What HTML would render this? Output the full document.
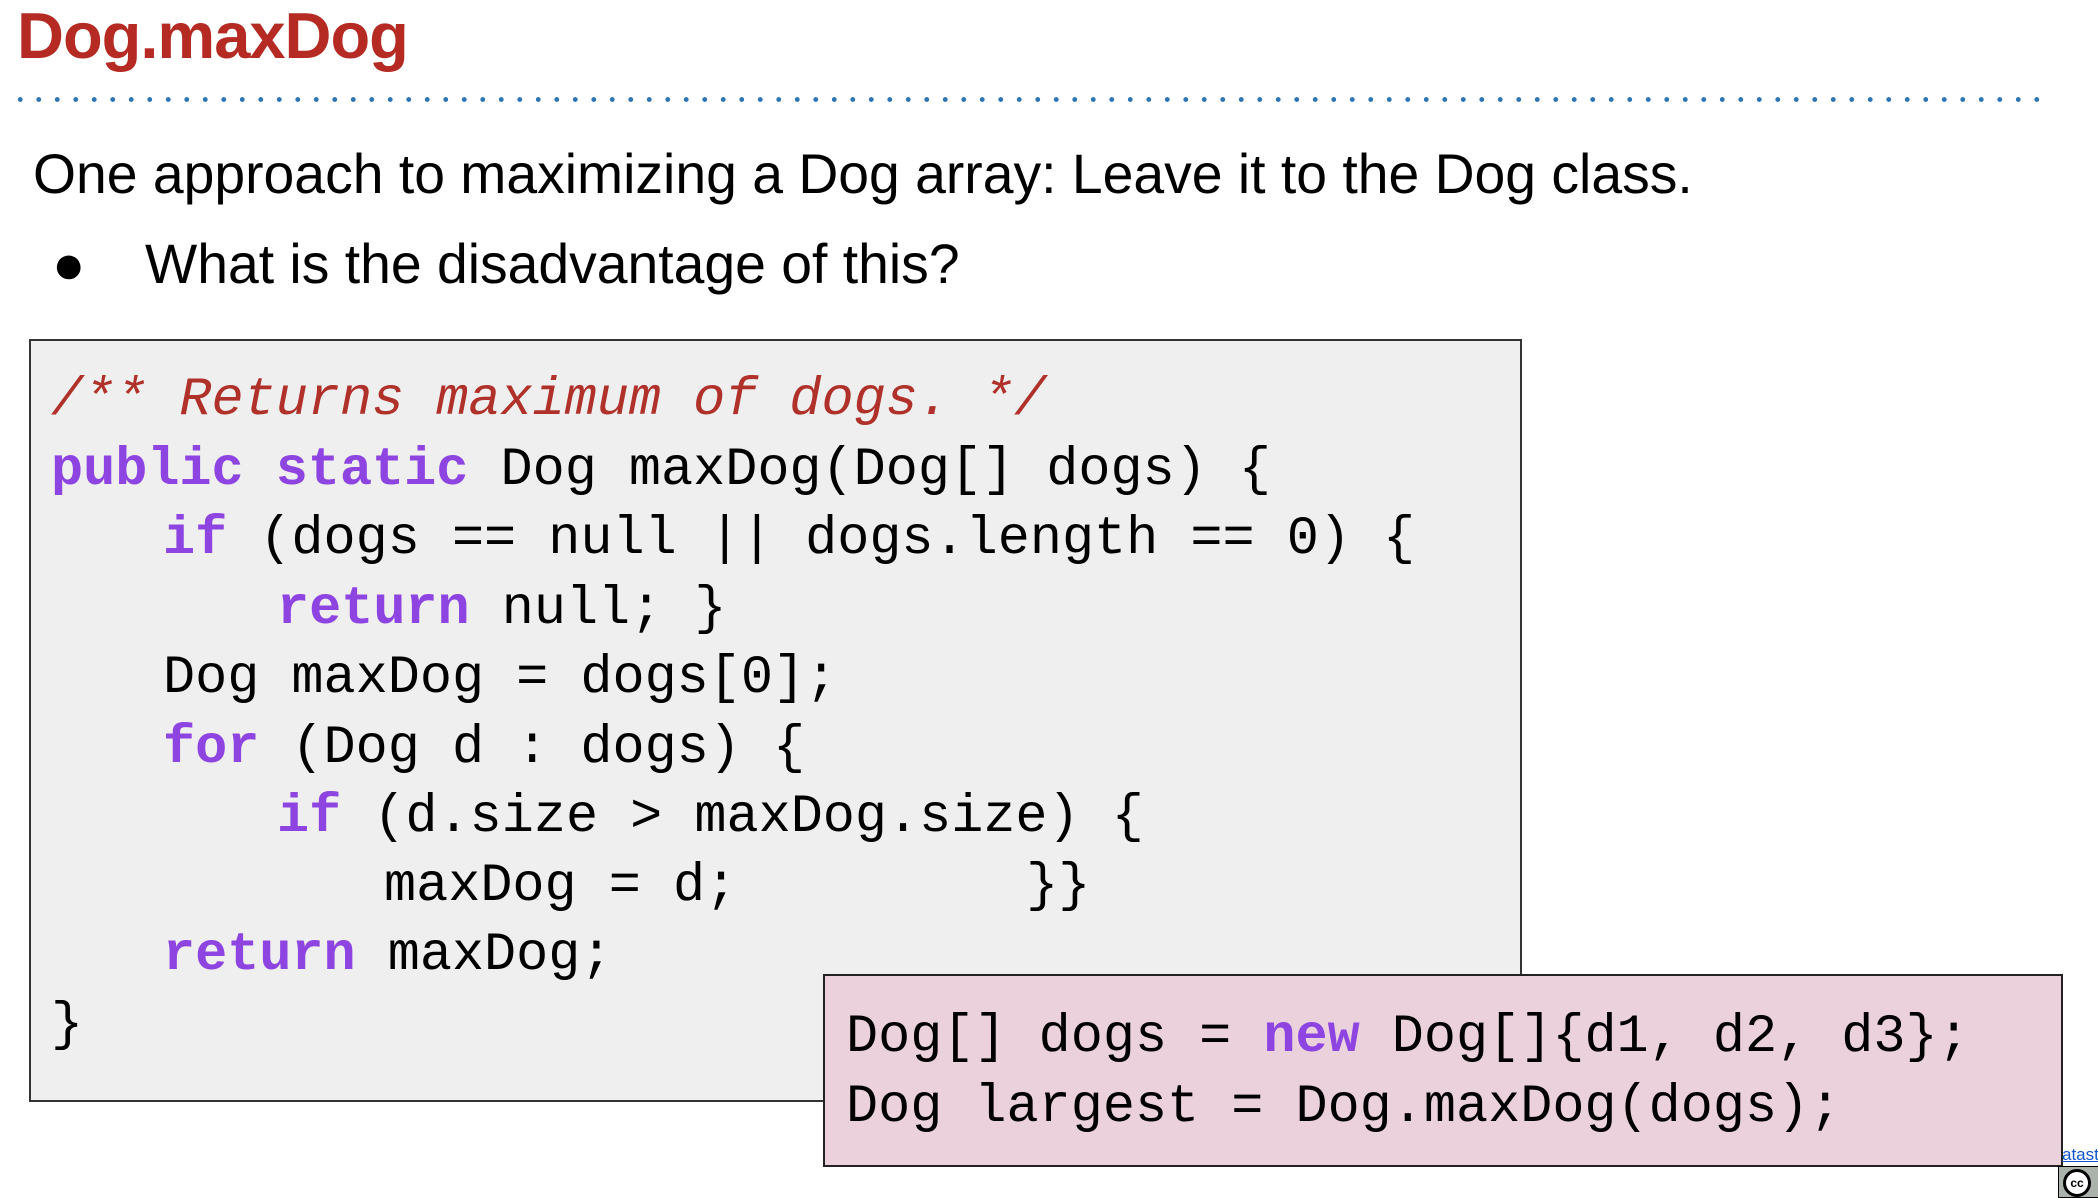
<!DOCTYPE html>
<html><head><meta charset="utf-8"><style>
body{margin:0;width:2098px;height:1196px;background:#fff;position:relative;overflow:hidden;font-family:"Liberation Sans",sans-serif}
.t{position:absolute;left:17px;top:-2px;font-size:65px;font-weight:bold;color:#b52a22;letter-spacing:-1px}
.dots{position:absolute;left:11px;top:97px;width:2040px;height:5px;background-image:radial-gradient(circle,#2e75b6 2.2px,transparent 2.6px);background-size:18.5px 5px;background-repeat:repeat-x}
.p{position:absolute;font-size:55.3px;color:#000;white-space:nowrap}
.box{position:absolute;left:29px;top:339px;width:1489px;height:759px;background:#efefef;border:2px solid #333}
.pink{position:absolute;left:823px;top:974px;width:1236px;height:189px;background:#ead1dc;border:2px solid #222}
.c{position:absolute;font-family:"Liberation Mono",monospace;font-size:53.5px;white-space:pre;color:#000;line-height:1}
.k{color:#8e44e0;font-weight:bold}
.cm{color:#b0302a;font-style:italic}
</style></head><body>
<div class="t">Dog.maxDog</div>
<div class="dots"></div>
<div class="p" style="left:33px;top:142px">One approach to maximizing a Dog array: Leave it to the Dog class.</div>
<div class="p" style="left:52px;top:232px">●</div>
<div class="p" style="left:145px;top:232px">What is the disadvantage of this?</div>
<div class="box"></div>
<div class="c cm" style="left:51px;top:374px">/** Returns maximum of dogs. */</div>
<div class="c" style="left:51px;top:444px"><span class="k">public static</span> Dog maxDog(Dog[] dogs) {</div>
<div class="c" style="left:163px;top:513px"><span class="k">if</span> (dogs == null || dogs.length == 0) {</div>
<div class="c" style="left:277px;top:583px"><span class="k">return</span> null; }</div>
<div class="c" style="left:163px;top:652px">Dog maxDog = dogs[0];</div>
<div class="c" style="left:163px;top:722px"><span class="k">for</span> (Dog d : dogs) {</div>
<div class="c" style="left:277px;top:791px"><span class="k">if</span> (d.size &gt; maxDog.size) {</div>
<div class="c" style="left:384px;top:860px">maxDog = d;         }}</div>
<div class="c" style="left:163px;top:929px"><span class="k">return</span> maxDog;</div>
<div class="c" style="left:51px;top:999px">}</div>
<div class="pink"></div>
<div class="c" style="left:846px;top:1011px">Dog[] dogs = <span class="k">new</span> Dog[]{d1, d2, d3};</div>
<div class="c" style="left:846px;top:1081px">Dog largest = Dog.maxDog(dogs);</div>
<div style="position:absolute;left:2062px;top:1145px;font-size:17px;color:#1155cc;text-decoration:underline">atast</div>
<div style="position:absolute;left:2058px;top:1166px;width:40px;height:30px;background:#aab2ab;border:1px solid #000"></div>
<div style="position:absolute;left:2063px;top:1169px;width:22px;height:22px;border-radius:50%;background:#fff;border:3px solid #000;font:bold 12px 'Liberation Sans',sans-serif;line-height:22px;text-align:center">cc</div>
</body></html>
